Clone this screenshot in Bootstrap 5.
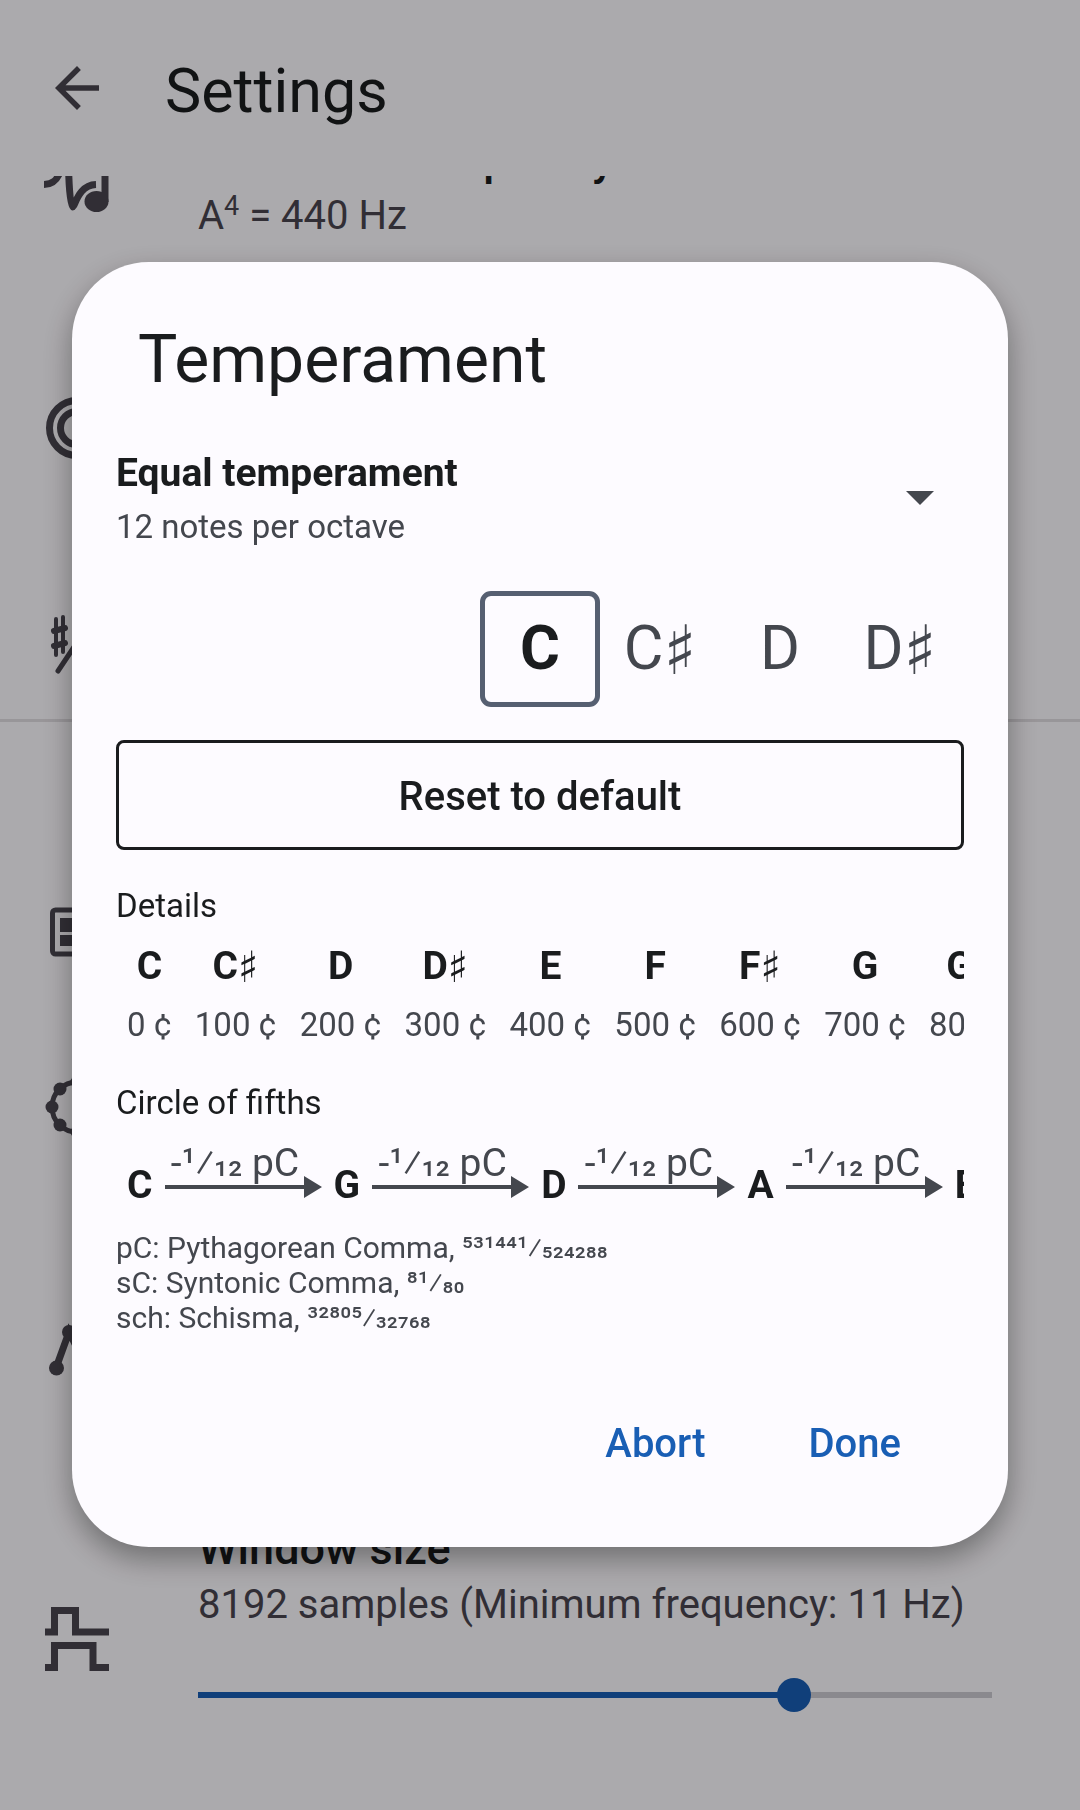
<!DOCTYPE html>
<html lang="en">
<head>
<meta charset="utf-8">
<meta name="viewport" content="width=device-width, initial-scale=1">
<title>Settings – Temperament</title>
<link href="https://cdn.jsdelivr.net/npm/bootstrap@5.3.0/dist/css/bootstrap.min.css" rel="stylesheet">
<style>
:root{--surface:#fdfbff;--ink:#1a1c1e;--ink-soft:#44474e;--icon:#49454f;--accent:#195eb4}
body{font-family:Roboto,"Noto Sans",sans-serif;background:var(--surface);color:var(--ink);font-size:39px;line-height:52px;overflow:hidden}
button{font-family:inherit}
.screen{height:100vh}
.app-bar{height:176px;padding:0 44px;gap:55px;align-items:center}
.app-bar h1{font-size:61px;line-height:76px;margin:6px 0 0;font-weight:400}
.icon-btn{background:none;border:0;padding:0;color:var(--icon);line-height:0}
.pref-list{overflow:hidden;min-height:0}
.pref-scroll{margin-top:-40px}
.pref{min-height:132px;padding:0 88px 0 44px;gap:88px}
.pref svg{width:66px;height:66px;flex:none;color:var(--icon)}
.pref-first{min-height:107px;margin-bottom:119px}
.pref-title{font-size:45px;font-weight:500;line-height:48px;margin:0 0 5px}
.pref-title label{display:block}
.pref-sub{font-size:40px;line-height:54px;margin:0;color:var(--icon)}
.pref-sub sup{font-size:27px;line-height:1;top:-14px;vertical-align:baseline}
.pref-rule{height:3px;background:#e1dde2;margin:9px 0 144px}
.gap-s{margin-bottom:43px}.gap-m{margin-bottom:84px}.gap-l{margin-bottom:110px}
.slider{appearance:none;-webkit-appearance:none;display:block;background:none;width:calc(100% + 34px);height:34px;margin:46px -17px 40px}
.slider::-webkit-slider-runnable-track{height:34px;background:linear-gradient(to right,var(--accent) 75%,#cccad1 75%) center/calc(100% - 34px) 6px no-repeat}
.slider::-webkit-slider-thumb{-webkit-appearance:none;width:34px;height:34px;border-radius:50%;background:var(--accent)}
.modal-backdrop.show{opacity:.32}
.modal-dialog{max-width:none;margin:27px 72px;min-height:calc(100% - 56px)}
.modal-content{background:var(--surface);border:0;border-radius:77px;padding:54px 44px 48px;color:var(--ink);box-shadow:0 12px 30px rgba(0,0,0,.36)}
.modal-title{font-size:66px;line-height:88px;font-weight:400;margin:0 22px 43px}
.picker{background:none;border:0;padding:0 30px 0 0;color:inherit;text-align:left}
.picker strong{display:block;font-size:39px;line-height:52px;font-weight:700}
.small-line{font-size:33px;line-height:44px}
.soft{color:var(--ink-soft)}
.picker .small-line{display:block;margin-top:6px}
.notes{margin-top:42px;padding-left:calc(50% - 60px);overflow:hidden}
.note-btn{flex:0 0 120px;height:116px;background:none;border:5px solid transparent;border-radius:11px;padding:0 0 2px;font-size:61px;line-height:70px;color:var(--ink-soft)}
.note-btn.active{border-color:#565f71;color:var(--ink);font-weight:700}
.shp{font-family:"DejaVu Sans",sans-serif;font-weight:400;font-size:43px;line-height:0;vertical-align:-3px}
.note-btn .shp{font-size:68px;vertical-align:-5px}
.reset-btn{margin-top:33px;padding:4px 0 0;height:110px;border:3px solid var(--ink);border-radius:8px;background:none;color:var(--ink);font-size:40px;font-weight:500;line-height:52px}
.sect{font-size:33px;line-height:44px;font-weight:400;margin:34px 0 0}
.cents{border-collapse:collapse;margin-top:12px;white-space:nowrap;text-align:center;line-height:44px}
.cents th{font-size:39px;line-height:52px;height:63px;vertical-align:top;padding:0 12px 0 11px;font-weight:700;text-align:center}
.cents td{font-size:33px;padding:0 12px 0 11px;color:var(--ink-soft)}
.fifths{margin-top:12px;padding-left:11px;gap:12px;white-space:nowrap;overflow:hidden}
.fifths b{padding-top:22px}
.hop{width:157px;text-align:center;color:var(--ink-soft);padding-right:16px}
.hop svg{display:block;width:157px;height:22px;margin-top:-13px}
.den{vertical-align:7px;line-height:0}
.legend-text{font-size:30px;line-height:35px;margin:19px 0 0;color:var(--ink-soft)}
.legend-text .den{vertical-align:5px}
.actions{margin-top:54px;gap:37px;padding-right:30px}
.actions button{height:110px;padding:0 33px;background:none;border:0;color:var(--accent);font-size:40px;font-weight:500;line-height:52px}
</style>
<script src="https://cdn.jsdelivr.net/npm/bootstrap@5.3.0/dist/js/bootstrap.bundle.min.js"></script>
</head>
<body>
<div class="screen d-flex flex-column">
  <header class="app-bar d-flex flex-shrink-0">
    <button class="icon-btn" type="button" aria-label="Back"><svg width="66" height="66" viewBox="0 0 24 24" fill="currentColor"><path d="M20 11H7.830l5.590-5.590L12 4l-8 8 8 8 1.410-1.410L7.830 13H20z"/></svg></button>
    <h1>Settings</h1>
  </header>
  <main class="pref-list flex-grow-1"><div class="pref-scroll">
    <div class="pref pref-first d-flex align-items-center">
      <svg viewBox="0 0 66 66" fill="none" stroke="currentColor" stroke-width="7"><path d="M0 27.500C9 27.500 13 23 16 15M24.500 0C24.500 22 26 50 28.500 50 31 50 34 28 52 27.500M61 0V45"/><ellipse cx="52.500" cy="44.500" rx="12" ry="10.500" fill="currentColor" stroke="none"/></svg>
      <div><h2 class="pref-title">Reference frequency</h2><p class="pref-sub">A<sup>4</sup> = 440 Hz</p></div>
    </div>
    <div class="pref gap-m d-flex align-items-center">
      <svg viewBox="0 0 66 66" fill="none" stroke="currentColor" stroke-width="7"><circle cx="33" cy="33" r="27.500"/><circle cx="33" cy="33" r="16.500"/></svg>
    </div>
    <div class="pref d-flex align-items-center">
      <svg viewBox="0 0 66 66" fill="none" stroke="currentColor" stroke-linecap="round"><path stroke-width="4" d="M12 8V44M19 6V41"/><path stroke-width="6" d="M10 20l11-3M10 35l11-3"/><path stroke-width="5" d="M14 60L50 6"/><path stroke-width="4" d="M44 28V60C60 50 56 38 44 46"/></svg>
    </div>
    <div class="pref-rule"></div>
    <div class="pref gap-s d-flex align-items-center">
      <svg viewBox="0 0 66 66"><rect x="8.500" y="11" width="49" height="44" rx="3" fill="none" stroke="currentColor" stroke-width="5"/><path fill="currentColor" d="M16 19h14v14H16zM16 36h14v11H16zM34 19h14v14H34zM34 36h14v11H34z"/></svg>
    </div>
    <div class="pref gap-l d-flex align-items-center">
      <svg viewBox="0 0 66 66" fill="currentColor"><circle cx="33" cy="33" r="25" fill="none" stroke="currentColor" stroke-width="5"/><circle cx="8" cy="33" r="6.500"/><circle cx="16" cy="15" r="6.500"/><circle cx="16" cy="51" r="6.500"/><circle cx="33" cy="8" r="6.500"/><circle cx="33" cy="58" r="6.500"/><circle cx="50" cy="15" r="6.500"/><circle cx="50" cy="51" r="6.500"/><circle cx="58" cy="33" r="6.500"/></svg>
    </div>
    <div class="pref gap-l d-flex align-items-center">
      <svg viewBox="0 0 66 66" fill="currentColor"><path fill="none" stroke="currentColor" stroke-width="7" d="M12 52L25 16 42 50 54 12"/><circle cx="12.500" cy="52" r="7.500"/><circle cx="25" cy="16" r="7"/><circle cx="42" cy="50" r="7"/><circle cx="54" cy="12" r="7"/></svg>
    </div>
    <div class="pref d-flex align-items-center">
      <svg viewBox="0 0 66 66" fill="none" stroke="currentColor" stroke-width="7"><path d="M1 26H10.500V4.500H31.500V26H65M1 61.500H10.500V39.500H49V61.500H65"/></svg>
      <div class="flex-grow-1"><h2 class="pref-title"><label for="win">Window size</label></h2><p class="pref-sub">8192 samples (Minimum frequency: 11 Hz)</p>
      <input id="win" class="slider" type="range" min="0" max="4" value="3"></div>
    </div>
  </div></main>
</div>

<div class="modal d-block" tabindex="-1" role="dialog" aria-labelledby="dlg-title">
  <div class="modal-dialog modal-dialog-centered">
    <div class="modal-content">
      <h2 class="modal-title" id="dlg-title">Temperament</h2>
      <button class="picker d-flex justify-content-between align-items-center" type="button" aria-haspopup="listbox">
        <span><strong>Equal temperament</strong><span class="small-line soft">12 notes per octave</span></span>
        <svg width="28" height="14" viewBox="0 0 28 14"><path d="M0 0h28L14 14z" fill="#44474e"/></svg>
      </button>
      <div class="notes d-flex">
        <button class="note-btn active" type="button">C</button>
        <button class="note-btn" type="button">C<span class="shp">♯</span></button>
        <button class="note-btn" type="button">D</button>
        <button class="note-btn" type="button">D<span class="shp">♯</span></button>
      </div>
      <button class="reset-btn w-100" type="button">Reset to default</button>
      <h3 class="sect">Details</h3>
      <div class="overflow-hidden">
        <table class="cents">
          <thead><tr><th>C</th><th>C<span class="shp">♯</span></th><th>D</th><th>D<span class="shp">♯</span></th><th>E</th><th>F</th><th>F<span class="shp">♯</span></th><th>G</th><th>G<span class="shp">♯</span></th></tr></thead>
          <tbody><tr><td>0 ¢</td><td>100 ¢</td><td>200 ¢</td><td>300 ¢</td><td>400 ¢</td><td>500 ¢</td><td>600 ¢</td><td>700 ¢</td><td>800 ¢</td></tr></tbody>
        </table>
      </div>
      <h3 class="sect">Circle of fifths</h3>
      <div class="fifths d-flex">
        <b>C</b>
        <div class="hop flex-shrink-0">-¹⁄<span class="den">₁₂</span> pC<svg viewBox="0 0 157 22" fill="#44474e"><path d="M0 9h139V0l18 11-18 11v-9H0z"/></svg></div>
        <b>G</b>
        <div class="hop flex-shrink-0">-¹⁄<span class="den">₁₂</span> pC<svg viewBox="0 0 157 22" fill="#44474e"><path d="M0 9h139V0l18 11-18 11v-9H0z"/></svg></div>
        <b>D</b>
        <div class="hop flex-shrink-0">-¹⁄<span class="den">₁₂</span> pC<svg viewBox="0 0 157 22" fill="#44474e"><path d="M0 9h139V0l18 11-18 11v-9H0z"/></svg></div>
        <b>A</b>
        <div class="hop flex-shrink-0">-¹⁄<span class="den">₁₂</span> pC<svg viewBox="0 0 157 22" fill="#44474e"><path d="M0 9h139V0l18 11-18 11v-9H0z"/></svg></div>
        <b>E</b>
      </div>
      <p class="legend-text">pC: Pythagorean Comma, ⁵³¹⁴⁴¹⁄<span class="den">₅₂₄₂₈₈</span><br>sC: Syntonic Comma, ⁸¹⁄<span class="den">₈₀</span><br>sch: Schisma, ³²⁸⁰⁵⁄<span class="den">₃₂₇₆₈</span></p>
      <div class="actions d-flex justify-content-end">
        <button type="button">Abort</button>
        <button type="button">Done</button>
      </div>
    </div>
  </div>
</div>
<div class="modal-backdrop show"></div>
</body>
</html>
